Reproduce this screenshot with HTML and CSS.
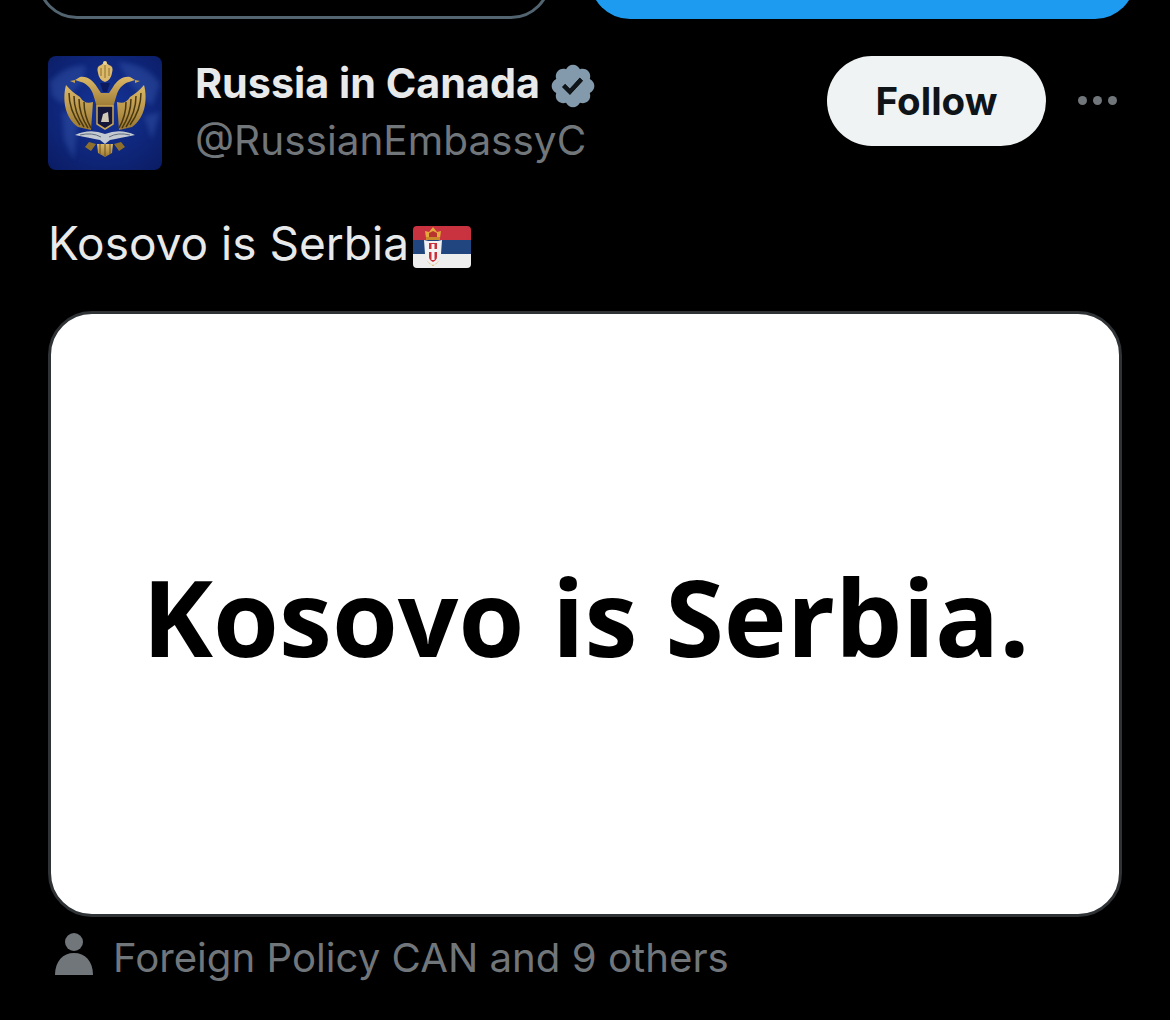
FILE: index.html
```html
<!DOCTYPE html>
<html lang="en">
<head>
<meta charset="utf-8">
<title>Russia in Canada</title>
<link rel="stylesheet" href="styles.css">
</head>
<body>
<div class="top-actions">
  <div class="btn-outline"></div>
  <div class="btn-blue"></div>
</div>
<header class="head">
  <div class="avatar">
    <svg viewBox="0 0 114 114" width="114" height="114">
      <defs>
        <radialGradient id="bg" cx="50%" cy="45%" r="75%">
          <stop offset="0" stop-color="#15359a"/>
          <stop offset="1" stop-color="#0a1b62"/>
        </radialGradient>
        <linearGradient id="gold" x1="0" y1="0" x2="0" y2="1">
          <stop offset="0" stop-color="#dcb968"/>
          <stop offset="1" stop-color="#9a7832"/>
        </linearGradient>
        <filter id="soft"><feGaussianBlur stdDeviation="2.500"/></filter>
      </defs>
      <rect width="114" height="114" fill="url(#bg)"/>
      <path d="M2 26 Q18 8 38 10 L34 26 L14 48 L4 40Z M70 6 Q100 8 112 28 L104 50 L84 30Z M14 54 L30 62 L26 104 L16 84Z M96 60 L112 56 L104 84Z" fill="#4a70c4" opacity=".3" filter="url(#soft)"/>
      <path d="M18 29 C14 44 17 62 30 71 L43 74 L45 46 C39 48 35 46 32 41 C27 38 22 34 18 29Z" fill="url(#gold)"/>
      <path d="M96 29 C100 44 97 62 84 71 L71 74 L69 46 C75 48 79 46 82 41 C87 38 92 34 96 29Z" fill="url(#gold)"/>
      <path d="M21 37 Q21 54 32 69 M26 40 Q26 56 36 71 M31 43 Q31 58 40 72 M36 46 Q36 60 43 72 M93 37 Q93 54 82 69 M88 40 Q88 56 78 71 M83 43 Q83 58 74 72 M78 46 Q78 60 71 72" stroke="#4a3810" stroke-width="1.500" fill="none"/>
      <path d="M32 21 L27 24 L33 26 C38 27 43 32 45 38 C47 44 48 48 49 52 L65 52 C66 48 67 44 69 38 C71 32 76 27 81 26 L87 24 L82 21 C74 20 69 25 65 31 L61 37 L53 37 L49 31 C45 25 40 20 32 21Z" fill="url(#gold)"/>
      <path d="M27 24 L22 25 L27 27Z M87 24 L92 25 L87 27Z" fill="#c9a24f"/>
      <path d="M50 17 Q48 10 53 9 Q57 5 61 9 Q66 10 64 17 Q63 24 57 26 Q51 24 50 17Z" fill="#dcb96b"/>
      <path d="M53 12 V20 M57 9 V22 M61 12 V20" stroke="#8f6f2c" stroke-width="1"/>
      <circle cx="57" cy="7" r="2" fill="#eed591"/>
      <path d="M52 27 L62 27 L59 36 L55 36Z" fill="#0b1a5e"/>
      <path d="M49 50 H65 V68 L57 73 L49 68Z" fill="#14173a" stroke="#caa757" stroke-width="1.500"/>
      <path d="M53 66 L55 58 L60 56 L61 66Z" fill="#cfc9b6"/>
      <path d="M27 79 Q42 72 57 78 Q72 72 87 79 Q72 82 62 84 L57 88 L52 84 Q42 82 27 79Z" fill="#c4cad1"/>
      <path d="M32 79 Q44 76 53 81 M82 79 Q70 76 61 81" stroke="#5f6c7c" stroke-width="1" fill="none"/>
      <path d="M49 88 L65 88 L64 97 L57 101 L50 97Z" fill="url(#gold)"/>
      <path d="M52 88 V98 M57 88 V100 M62 88 V98" stroke="#6b5120" stroke-width="1"/>
      <path d="M48 88 L41 86 L37 91 L43 95Z M66 88 L73 86 L77 91 L71 95Z" fill="#8f6f2c"/>
    </svg>
  </div>
  <div class="identity">
    <div class="name-row">
      <span class="name">Russia in Canada</span>
      <svg class="badge" viewBox="0 0 24 24" width="50" height="50">
        <path fill="#829aab" d="M22.25 12c0-1.43-.88-2.67-2.19-3.34.46-1.39.2-2.9-.81-3.91s-2.52-1.27-3.91-.81c-.66-1.31-1.91-2.19-3.34-2.19s-2.67.88-3.33 2.19c-1.4-.46-2.91-.2-3.92.81s-1.26 2.52-.8 3.91c-1.31.67-2.2 1.91-2.2 3.34s.89 2.67 2.2 3.34c-.46 1.39-.21 2.9.8 3.91s2.52 1.26 3.91.81c.67 1.31 1.91 2.19 3.34 2.19s2.68-.88 3.34-2.19c1.39.45 2.9.2 3.91-.81s1.27-2.52.81-3.91c1.31-.67 2.19-1.91 2.19-3.34zm-11.71 4.2L6.8 12.46l1.41-1.42 2.26 2.26 4.8-5.23 1.47 1.36-6.2 6.77z"/>
        <path fill="#0f1419" d="M10.54 16.2L6.8 12.46l1.41-1.42 2.26 2.26 4.8-5.23 1.47 1.36-6.2 6.77z"/>
      </svg>
    </div>
    <div class="handle">@RussianEmbassyC</div>
  </div>
  <div class="follow">Follow</div>
  <div class="more"><i></i><i></i><i></i></div>
</header>
<p class="tweet">Kosovo is Serbia<svg class="flag" viewBox="0 0 58 42" width="58" height="42">
    <defs><clipPath id="fc"><rect width="58" height="42" rx="4"/></clipPath></defs>
    <g clip-path="url(#fc)">
      <rect width="58" height="14" fill="#c9323f"/>
      <rect y="14" width="58" height="14" fill="#21457e"/>
      <rect y="28" width="58" height="14" fill="#eeeeee"/>
      <path d="M13 12 L12 5 L16 6 L20 1 L24 6 L28 5 L27 12Z" fill="#e3a93a"/>
      <path d="M16 11 L16 7 L20 5 L24 7 L24 11Z" fill="#b8352f"/>
      <rect x="13" y="11" width="14" height="3" fill="#c9882a"/>
      <path d="M11 14 L15 15 L16 34 Q13 32 12 28Z M29 14 L25 15 L24 34 Q27 32 28 28Z" fill="#f1f1f1"/>
      <path d="M15 15 H25 V32 Q25 36 20 38 Q15 36 15 32Z" fill="#f1f1f1"/>
      <path d="M16 17 H24 V31 Q24 34 20 36 Q16 34 16 31Z" fill="#c8303a"/>
      <path d="M18.500 18 H21.500 V23 H24 V26 H21.500 V34 H18.500 V26 H16 V23 H18.500Z" fill="#f4f4f4"/>
      <path d="M13 34 L20 40 L27 34 L23 38 L20 39 L17 38Z" fill="#d9a13a"/>
    </g>
  </svg></p>
<div class="card"><span class="card-text">Kosovo is Serbia.</span></div>
<footer class="foot">
  <svg class="person" viewBox="0 0 38 42" width="38" height="42">
    <circle cx="19" cy="9" r="9" fill="#71767b"/>
    <path d="M0 42 C0 28 8 20 19 20 C30 20 38 28 38 42Z" fill="#71767b"/>
  </svg>
  <span class="foot-text">Foreign Policy CAN and 9 others</span>
</footer>
</body>
</html>
```
FILE: styles.css
```css
* { box-sizing: border-box; }
html, body { margin: 0; height: 100%; }
body {
  width: 1170px;
  height: 1020px;
  overflow: hidden;
  background: #000;
  color: #e7e9ea;
  font-family: Inter, Roboto, "Liberation Sans", sans-serif;
}
.top-actions {
  height: 19px;
  overflow: hidden;
  display: flex;
  align-items: flex-end;
  padding-left: 37px;
  gap: 39px;
}
.btn-outline {
  flex: none;
  width: 514px;
  height: 90px;
  border: 3px solid #536471;
  border-radius: 40px;
}
.btn-blue {
  flex: none;
  width: 545px;
  height: 90px;
  background: #1d9bf0;
  border-radius: 40px;
}
.head {
  display: flex;
  align-items: flex-start;
  margin-top: 37px;
  padding-left: 48px;
}
.avatar {
  flex: none;
  width: 114px;
  height: 114px;
  border-radius: 8px;
  overflow: hidden;
}
.avatar svg { display: block; }
.identity {
  flex: none;
  width: 632px;
  margin-left: 33px;
}
.name-row {
  display: flex;
  align-items: center;
  gap: 8px;
  height: 54px;
  margin-bottom: 3px;
}
.name {
  font-size: 41.3px;
  font-weight: 700;
  line-height: 54px;
  color: #e7e9ea;
}
.badge { flex: none; margin-top: 6px; }
.handle {
  font-size: 40.5px;
  line-height: 56px;
  color: #71767b;
}
.follow {
  flex: none;
  width: 219px;
  height: 90px;
  border-radius: 45px;
  background: #eff3f4;
  color: #0f1419;
  font-size: 38.5px;
  font-weight: 700;
  display: flex;
  align-items: center;
  justify-content: center;
}
.more {
  flex: none;
  display: flex;
  gap: 6px;
  margin: 40px 0 0 32px;
}
.more i {
  display: block;
  width: 9px;
  height: 9px;
  border-radius: 50%;
  background: #71767b;
}
.tweet {
  margin: 47px 0 0;
  padding-left: 48px;
  height: 52px;
  display: flex;
  align-items: center;
  font-size: 46px;
  line-height: 52px;
  color: #e7e9ea;
}
.flag { flex: none; margin-left: 4px; margin-top: 7px; }
.card {
  margin: 42px 0 0 48px;
  width: 1074px;
  height: 606px;
  background: #fff;
  border: 3px solid #2f3336;
  border-radius: 44px;
  display: flex;
  align-items: center;
  justify-content: center;
}
.card-text {
  font-family: "Open Sans", sans-serif;
  font-weight: 700;
  font-size: 106.5px;
  color: #000;
  padding-left: 2px;
  padding-top: 3px;
}
.foot {
  display: flex;
  align-items: flex-start;
  gap: 20px;
  margin-top: 16px;
  padding-left: 55px;
  font-size: 40.2px;
  line-height: 48px;
  color: #71767b;
}
.foot-text { margin-top: 1px; }
```
